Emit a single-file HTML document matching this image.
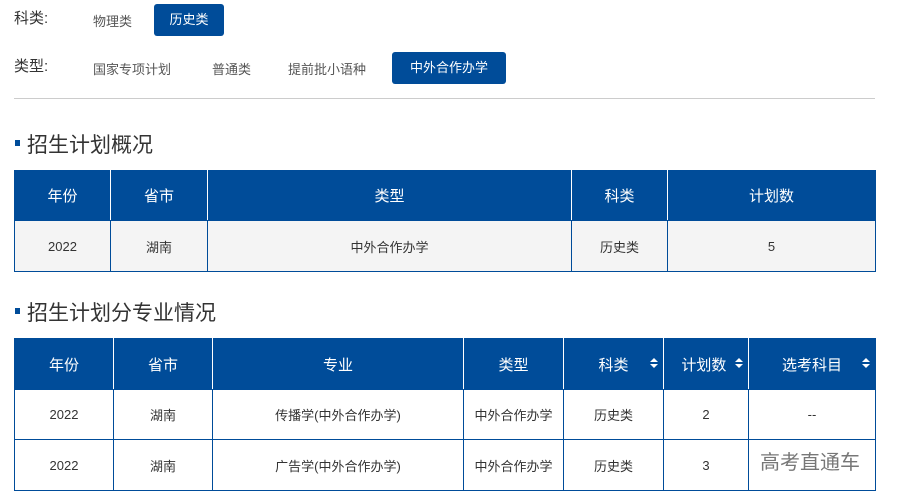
<html><head><style>
*{margin:0;padding:0;box-sizing:border-box}
body{width:898px;height:500px;background:#fff;font-family:"Liberation Sans","Noto Sans CJK SC",sans-serif;position:relative;overflow:hidden;color:#333}
.a{position:absolute}
.lbl{font-size:15px;color:#333}
.opt{font-size:13px;color:#555;position:absolute}
.btn{position:absolute;background:#004c99;color:#fff;font-size:13px;border-radius:3px;text-align:center}
.h{font-size:21px;color:#333}
.sq{position:absolute;width:5px;height:6px;background:#004c99}
table{position:absolute;border-collapse:collapse;table-layout:fixed}
td,th{border:1px solid #004c99;text-align:center;font-size:13px;color:#333;font-weight:normal}
th{background:#004c99;color:#fff;font-size:15px;border-color:#004c99;border-right-color:#fff;position:relative}
th:last-child{border-right-color:#004c99}
.s::after{content:"";position:absolute;right:5px;top:19px;border:4px solid transparent;border-bottom:4px solid #fff;border-top:none}
.s::before{content:"";position:absolute;right:5px;top:25px;border:4px solid transparent;border-top:4px solid #fff;border-bottom:none}
tr.g td{background:#f4f4f4}
</style></head><body>
<div class="a lbl" style="left:14px;top:7px">科类:</div>
<div class="opt" style="left:93px;top:11px">物理类</div>
<div class="btn" style="left:154px;top:4px;width:70px;height:32px;line-height:32px">历史类</div>
<div class="a lbl" style="left:14px;top:55px">类型:</div>
<div class="opt" style="left:93px;top:59px">国家专项计划</div>
<div class="opt" style="left:212px;top:59px">普通类</div>
<div class="opt" style="left:288px;top:59px">提前批小语种</div>
<div class="btn" style="left:392px;top:52px;width:114px;height:32px;line-height:32px">中外合作办学</div>
<div class="a" style="left:14px;top:98px;width:861px;height:1px;background:#ccc"></div>
<div class="sq" style="left:15px;top:140px"></div>
<div class="a h" style="left:27px;top:129px">招生计划概况</div>
<table style="left:14px;top:170px;width:861px">
<colgroup><col style="width:96px"><col style="width:97px"><col style="width:364px"><col style="width:96px"><col style="width:208px"></colgroup>
<tr style="height:50px"><th>年份</th><th>省市</th><th>类型</th><th>科类</th><th>计划数</th></tr>
<tr class="g" style="height:51px"><td>2022</td><td>湖南</td><td>中外合作办学</td><td>历史类</td><td>5</td></tr>
</table>
<div class="sq" style="left:15px;top:308px"></div>
<div class="a h" style="left:27px;top:297px">招生计划分专业情况</div>
<table style="left:14px;top:338px;width:861px">
<colgroup><col style="width:99px"><col style="width:99px"><col style="width:251px"><col style="width:100px"><col style="width:100px"><col style="width:85px"><col style="width:127px"></colgroup>
<tr style="height:51px"><th>年份</th><th>省市</th><th>专业</th><th>类型</th><th class="s">科类</th><th class="s">计划数&nbsp;</th><th class="s">选考科目</th></tr>
<tr style="height:50px"><td>2022</td><td>湖南</td><td>传播学(中外合作办学)</td><td>中外合作办学</td><td>历史类</td><td>2</td><td>--</td></tr>
<tr style="height:51px"><td>2022</td><td>湖南</td><td>广告学(中外合作办学)</td><td>中外合作办学</td><td>历史类</td><td>3</td><td></td></tr>
</table>
<div class="a" style="left:760px;top:446px;font-size:20px;color:#777">高考直通车</div>
</body></html>
